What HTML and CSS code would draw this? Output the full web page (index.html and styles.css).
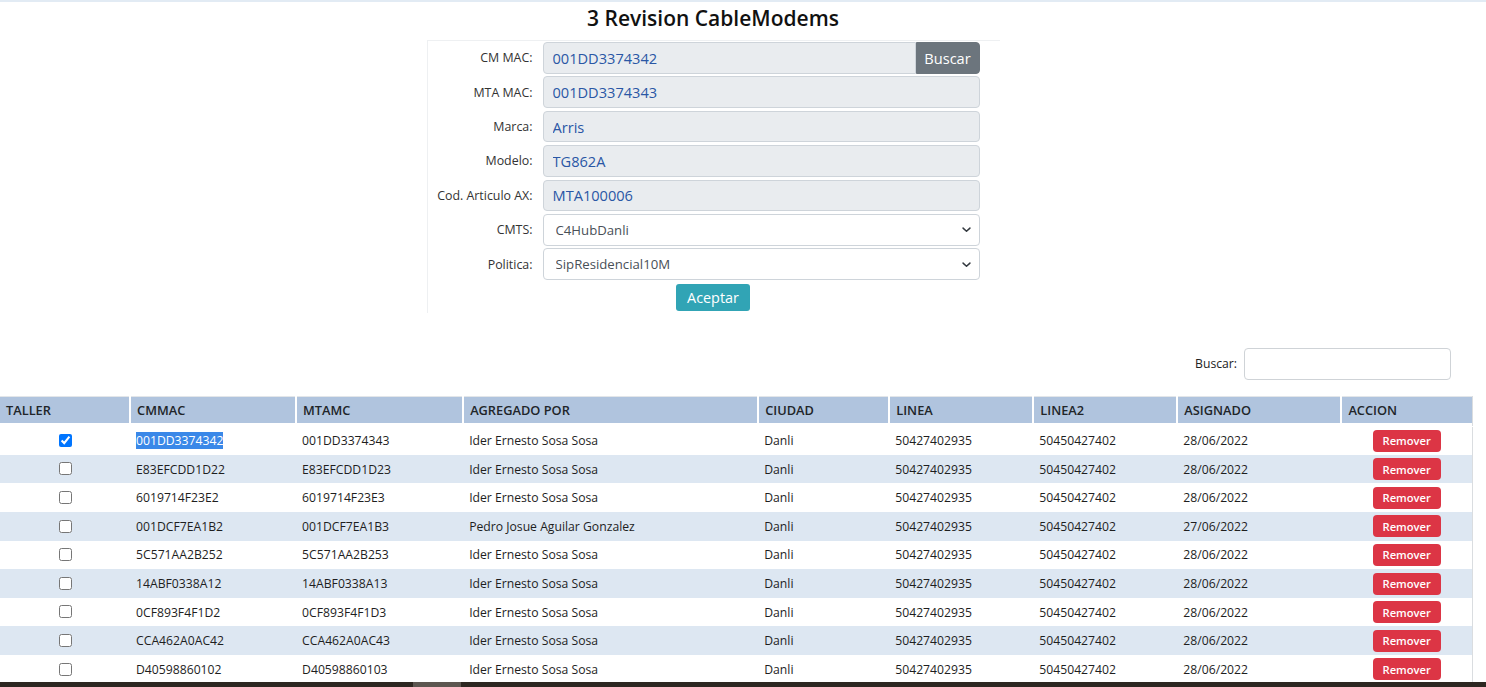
FILE: index.html
```html
<!DOCTYPE html>
<html lang="es">
<head>
<meta charset="utf-8">
<title>3 Revision CableModems</title>
<link rel="stylesheet" href="styles.css">
</head>
<body>
<div class="top">
  <h4 class="title">3 Revision CableModems</h4>
  <form class="form-box">
    <label class="lbl">CM MAC:</label>
    <div class="group">
      <input class="ctl ro grp-in" type="text" value="001DD3374342" readonly>
      <button type="button" class="btn-buscar">Buscar</button>
    </div>
    <label class="lbl">MTA MAC:</label>
    <input class="ctl ro" type="text" value="001DD3374343" readonly>
    <label class="lbl">Marca:</label>
    <input class="ctl ro" type="text" value="Arris" readonly>
    <label class="lbl">Modelo:</label>
    <input class="ctl ro" type="text" value="TG862A" readonly>
    <label class="lbl">Cod. Articulo AX:</label>
    <input class="ctl ro" type="text" value="MTA100006" readonly>
    <label class="lbl">CMTS:</label>
    <select class="ctl sel"><option>C4HubDanli</option></select>
    <label class="lbl">Politica:</label>
    <select class="ctl sel"><option>SipResidencial10M</option></select>
    <div class="actions"><button type="button" class="btn-aceptar">Aceptar</button></div>
  </form>
</div>

<div class="search-row">
  <label class="search-lbl">Buscar:</label>
  <input class="search-in" type="text">
</div>

<table class="grid">
  <colgroup>
    <col class="c1"><col class="c2"><col class="c3"><col class="c4"><col class="c5"><col class="c6"><col class="c7"><col class="c8"><col class="c9">
  </colgroup>
  <thead>
    <tr><th>TALLER</th><th>CMMAC</th><th>MTAMC</th><th>AGREGADO POR</th><th>CIUDAD</th><th>LINEA</th><th>LINEA2</th><th>ASIGNADO</th><th>ACCION</th></tr>
  </thead>
  <tbody>
    <tr><td class="chk"><input type="checkbox" checked></td><td><span class="hl">001DD3374342</span></td><td>001DD3374343</td><td>Ider Ernesto Sosa Sosa</td><td>Danli</td><td>50427402935</td><td>50450427402</td><td>28/06/2022</td><td class="act"><button type="button" class="btn-rm">Remover</button></td></tr>
    <tr><td class="chk"><input type="checkbox"></td><td>E83EFCDD1D22</td><td>E83EFCDD1D23</td><td>Ider Ernesto Sosa Sosa</td><td>Danli</td><td>50427402935</td><td>50450427402</td><td>28/06/2022</td><td class="act"><button type="button" class="btn-rm">Remover</button></td></tr>
    <tr><td class="chk"><input type="checkbox"></td><td>6019714F23E2</td><td>6019714F23E3</td><td>Ider Ernesto Sosa Sosa</td><td>Danli</td><td>50427402935</td><td>50450427402</td><td>28/06/2022</td><td class="act"><button type="button" class="btn-rm">Remover</button></td></tr>
    <tr><td class="chk"><input type="checkbox"></td><td>001DCF7EA1B2</td><td>001DCF7EA1B3</td><td>Pedro Josue Aguilar Gonzalez</td><td>Danli</td><td>50427402935</td><td>50450427402</td><td>27/06/2022</td><td class="act"><button type="button" class="btn-rm">Remover</button></td></tr>
    <tr><td class="chk"><input type="checkbox"></td><td>5C571AA2B252</td><td>5C571AA2B253</td><td>Ider Ernesto Sosa Sosa</td><td>Danli</td><td>50427402935</td><td>50450427402</td><td>28/06/2022</td><td class="act"><button type="button" class="btn-rm">Remover</button></td></tr>
    <tr><td class="chk"><input type="checkbox"></td><td>14ABF0338A12</td><td>14ABF0338A13</td><td>Ider Ernesto Sosa Sosa</td><td>Danli</td><td>50427402935</td><td>50450427402</td><td>28/06/2022</td><td class="act"><button type="button" class="btn-rm">Remover</button></td></tr>
    <tr><td class="chk"><input type="checkbox"></td><td>0CF893F4F1D2</td><td>0CF893F4F1D3</td><td>Ider Ernesto Sosa Sosa</td><td>Danli</td><td>50427402935</td><td>50450427402</td><td>28/06/2022</td><td class="act"><button type="button" class="btn-rm">Remover</button></td></tr>
    <tr><td class="chk"><input type="checkbox"></td><td>CCA462A0AC42</td><td>CCA462A0AC43</td><td>Ider Ernesto Sosa Sosa</td><td>Danli</td><td>50427402935</td><td>50450427402</td><td>28/06/2022</td><td class="act"><button type="button" class="btn-rm">Remover</button></td></tr>
    <tr><td class="chk"><input type="checkbox"></td><td>D40598860102</td><td>D40598860103</td><td>Ider Ernesto Sosa Sosa</td><td>Danli</td><td>50427402935</td><td>50450427402</td><td>28/06/2022</td><td class="act"><button type="button" class="btn-rm">Remover</button></td></tr>
  </tbody>
</table>

<div class="bottom-bar"><div class="bar-thumb"></div></div>
</body>
</html>
```

FILE: styles.css
```css
html, body {
  margin: 0;
  padding: 0;
  overflow: hidden;
}
body {
  border-top: 2px solid #e2ebf4;
  font-family: "Open Sans", "Noto Sans", sans-serif;
  color: #212529;
  background: #fff;
}
.top {
  width: 1426px;
  display: flex;
  flex-direction: column;
  align-items: center;
}
.title {
  margin: 0 0 6px 0;
  height: 32px;
  line-height: 32px;
  font-size: 21px;
  font-weight: 600;
  color: #111;
}
.form-box {
  box-sizing: border-box;
  width: 573px;
  margin: 0;
  padding: 1px 19px 2px 0;
  border-top: 1px solid #eef0f2;
  border-left: 1px solid #eef0f2;
  display: grid;
  grid-template-columns: 105px 437px;
  column-gap: 10px;
  row-gap: 2.8px;
  align-items: center;
}
.lbl {
  text-align: right;
  font-size: 12.4px;
  color: #333;
}
.ctl {
  box-sizing: border-box;
  height: 31.6px;
  width: 100%;
  margin: 0;
  border: 1px solid #ced4da;
  border-radius: 4px;
  font-family: "Open Sans", "Noto Sans", sans-serif;
  outline: none;
}
.ro {
  background: #e9ecef;
  color: #2a57a5;
  font-size: 14.6px;
  padding: 0 9px;
}
.group {
  display: flex;
  width: 437px;
}
.grp-in {
  flex: 1;
  border-radius: 4px 0 0 4px;
}
.btn-buscar {
  box-sizing: border-box;
  width: 64px;
  height: 31.6px;
  margin: 0;
  border: 1px solid #6c757d;
  border-radius: 0 4px 4px 0;
  background: #6c757d;
  color: #fff;
  font-family: "Open Sans", "Noto Sans", sans-serif;
  font-size: 14.6px;
  padding: 0;
}
.sel {
  appearance: none;
  -webkit-appearance: none;
  background-color: #fff;
  background-image: url("data:image/svg+xml,%3csvg xmlns='http://www.w3.org/2000/svg' viewBox='0 0 16 16'%3e%3cpath fill='none' stroke='%23343a40' stroke-linecap='round' stroke-linejoin='round' stroke-width='2.2' d='M3 6l5 4.5 5-4.5'/%3e%3c/svg%3e");
  background-repeat: no-repeat;
  background-position: right 6px center;
  background-size: 13px 11px;
  color: #495057;
  font-size: 13.2px;
  padding: 0 24px 0 12px;
}
.actions {
  grid-column: 1 / 3;
  display: flex;
  justify-content: center;
  padding-left: 19px;
  padding-top: 1px;
}
.btn-aceptar {
  box-sizing: border-box;
  width: 74px;
  height: 27px;
  margin: 0;
  padding: 0;
  border: none;
  border-radius: 3px;
  background: #31a4b5;
  color: #fff;
  font-family: "Open Sans", "Noto Sans", sans-serif;
  font-size: 14.4px;
}
.search-row {
  width: 1451px;
  margin-top: 35px;
  display: flex;
  justify-content: flex-end;
  align-items: center;
  gap: 7px;
}
.search-lbl {
  font-size: 12.2px;
  color: #222;
}
.search-in {
  box-sizing: border-box;
  width: 207px;
  height: 32px;
  margin: 0;
  border: 1px solid #cfd3d7;
  border-radius: 4px;
}
.grid {
  margin-top: 16px;
  width: 1473px;
  border-collapse: collapse;
  table-layout: fixed;
  border-top: 1px solid #e3e6e9;
  border-right: 1px solid #dadde0;
}
.c1 { width: 130px; }
.c2 { width: 166px; }
.c3 { width: 167px; }
.c4 { width: 295px; }
.c5 { width: 131px; }
.c6 { width: 144px; }
.c7 { width: 144px; }
.c8 { width: 164px; }
.c9 { width: 131px; }
.grid th {
  background: #b0c4de;
  height: 30px;
  padding: 0 6px 3px 6px;
  text-align: left;
  font-size: 12.8px;
  font-weight: 600;
  color: #212529;
  border-right: 2px solid #fff;
  border-bottom: 1.5px solid #fff;
  box-sizing: border-box;
  background-clip: padding-box;
  box-shadow: inset 0 -3px 0 #fff;
}
.grid th:last-child {
  border-right: none;
}
.grid td {
  height: 28.6px;
  padding: 0 6px;
  font-size: 12.2px;
  color: #1e1e1e;
  white-space: nowrap;
  box-sizing: border-box;
}
.grid tbody tr:nth-child(even) td {
  background: #dde7f2;
}
.grid td.chk {
  text-align: center;
  padding-bottom: 3px;
}
.chk input {
  margin: 0;
  width: 13px;
  height: 13px;
  vertical-align: middle;
}
.hl {
  background: #3a88e8;
  color: #fff;
}
.grid td.act {
  text-align: center;
}
.btn-rm {
  box-sizing: border-box;
  width: 68px;
  height: 22px;
  margin: 0;
  padding: 0;
  border: none;
  border-radius: 4px;
  background: #dc3545;
  color: #fff;
  font-family: "Open Sans", "Noto Sans", sans-serif;
  font-size: 11.2px;
  font-weight: 600;
  vertical-align: middle;
}
.bottom-bar {
  position: fixed;
  left: 0;
  right: 0;
  bottom: 0;
  height: 5px;
  background: #2d2721;
}
.bar-thumb {
  margin-left: 413px;
  width: 48px;
  height: 5px;
  background: #5c5650;
}
```
